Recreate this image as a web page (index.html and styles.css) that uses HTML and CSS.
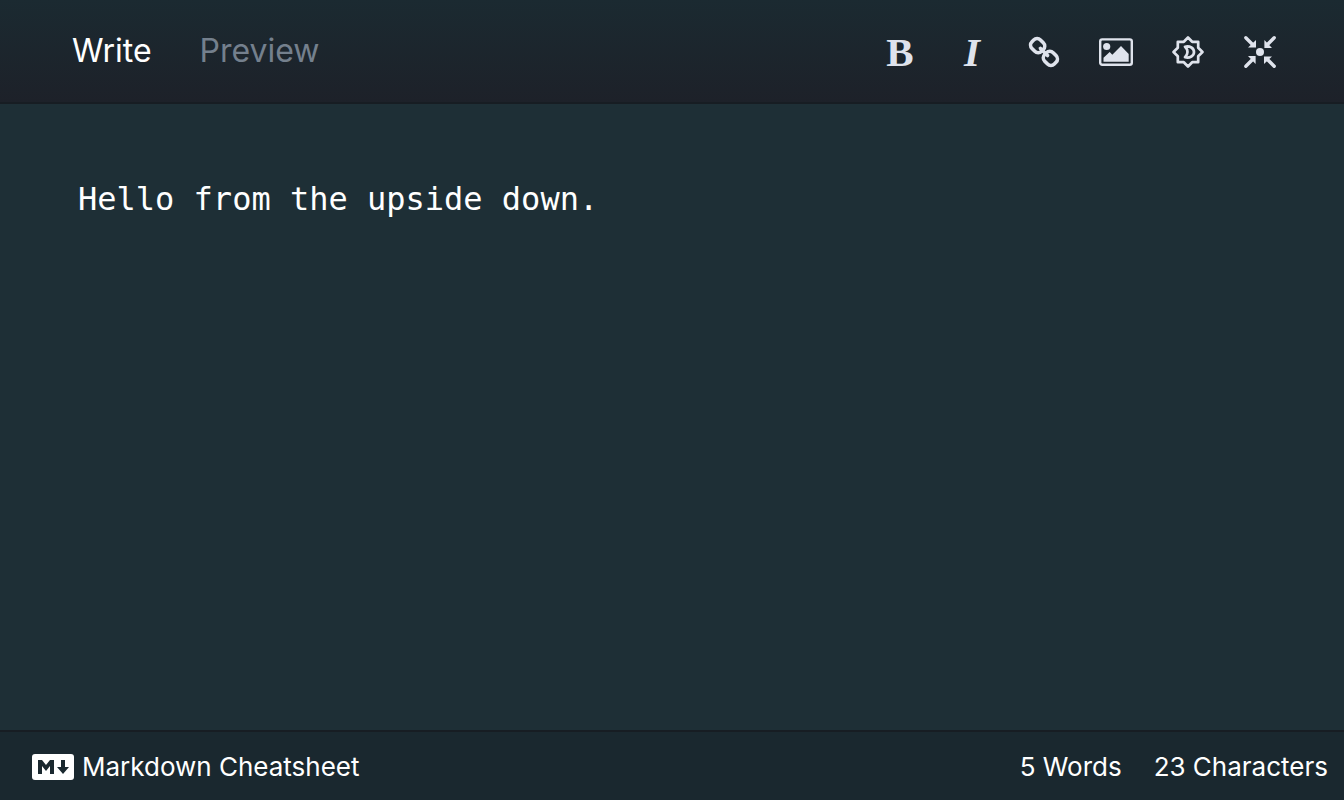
FILE: index.html
```html
<!DOCTYPE html>
<html lang="en">
<head>
<meta charset="utf-8">
<title>Markdown editor</title>
<link rel="stylesheet" href="styles.css">
</head>
<body>
<main class="editor">
  <header class="toolbar">
    <nav class="tabs" role="tablist" aria-label="Editor mode">
      <button class="tab tab-active" type="button" role="tab" aria-selected="true">Write</button>
      <button class="tab" type="button" role="tab" aria-selected="false">Preview</button>
    </nav>
    <div class="tools">
      <button class="tool tool-bold" type="button" aria-label="Bold">B</button>
      <button class="tool tool-italic" type="button" aria-label="Italic">I</button>
      <button class="tool" type="button" aria-label="Link">
        <svg class="icon" viewBox="0 0 40 40" fill="none" stroke="currentColor" stroke-width="3.6" stroke-linecap="round">
          <g transform="rotate(45 20 20)">
            <rect x="4.200" y="14" width="13.600" height="12" rx="4.800"/>
            <rect x="22.200" y="14" width="13.600" height="12" rx="4.800"/>
            <path d="M15 20h10"/>
          </g>
        </svg>
      </button>
      <button class="tool" type="button" aria-label="Image">
        <svg class="icon" viewBox="0 0 40 40">
          <rect x="4.2" y="7.4" width="31.6" height="25.4" rx="2" fill="none" stroke="currentColor" stroke-width="2.4"/>
          <circle cx="10.7" cy="14.5" r="3.6" fill="currentColor"/>
          <path d="M7.500 29.700v-4l6.200-5.700 2.600 2.700 8.700-8.700 7.700 8v7.700z" fill="currentColor"/>
        </svg>
      </button>
      <button class="tool" type="button" aria-label="Toggle dark theme">
        <svg class="icon" viewBox="0 0 40 40" fill="none" stroke="currentColor" stroke-width="2.700" stroke-linejoin="round">
          <path d="M20 5.500l4.200 4.300h6v6l4.300 4.200-4.300 4.200v6h-6l-4.200 4.300-4.200-4.300h-6v-6l-4.300-4.200 4.300-4.200v-6h6z"/>
          <path d="M17 14.700c5-1 9 1.300 9 5.300s-4 6.300-9 5.300c3.300-3 3.300-7.600 0-10.600z"/>
        </svg>
      </button>
      <button class="tool" type="button" aria-label="Exit full screen">
        <svg class="icon" viewBox="0 0 40 40" fill="currentColor">
          <circle cx="20" cy="20" r="4"/>
          <g id="arrow">
            <path d="M5.800 5.800l7 7" stroke="currentColor" stroke-width="3.400" stroke-linecap="round"/>
            <path d="M16 8v7.600h-8z"/>
          </g>
          <use href="#arrow" transform="rotate(90 20 20)"/>
          <use href="#arrow" transform="rotate(180 20 20)"/>
          <use href="#arrow" transform="rotate(270 20 20)"/>
        </svg>
      </button>
    </div>
  </header>
  <textarea class="document" aria-label="Markdown text" spellcheck="false">Hello from the upside down.</textarea>
  <footer class="status">
    <a class="cheatsheet" href="#">
      <svg class="mark" viewBox="0 0 42 26" aria-hidden="true">
        <rect width="42" height="26" rx="3" fill="#fff"/>
        <path d="M6 20V6h4l4 5 4-5h4v14h-4v-8l-4 5-4-5v8zM29 6h4v7h4l-6 7-6-7h4z" fill="#1a282f"/>
      </svg>
      <span>Markdown Cheatsheet</span>
    </a>
    <div class="counts">
      <span>5 Words</span>
      <span>23 Characters</span>
    </div>
  </footer>
</main>
</body>
</html>
```
FILE: styles.css
```css
* {
  box-sizing: border-box;
}

body {
  margin: 0;
  background: #1e2f36;
  color: #fff;
  font-family: Inter, "Liberation Sans", sans-serif;
}

button {
  padding: 0;
  border: 0;
  background: none;
  font: inherit;
  cursor: pointer;
}

.editor {
  display: flex;
  flex-direction: column;
  min-height: 100vh;
}

.toolbar {
  display: flex;
  align-items: flex-start;
  justify-content: space-between;
  padding: 31px 64px 29px 72px;
  border-bottom: 2px solid #171d23;
  background: linear-gradient(#1b2a31, #1d2129);
}

.tabs {
  display: flex;
  gap: 48px;
}

.tab {
  color: #74808d;
  font-size: 32px;
  line-height: 40px;
}

.tab-active {
  color: #fff;
}

.tools {
  display: flex;
  gap: 32px;
}

.tool {
  display: grid;
  place-items: center;
  width: 40px;
  height: 42px;
  color: #dfe3ec;
}

.tool-bold,
.tool-italic {
  font: bold 41px/42px "Liberation Serif", serif;
}

.tool-italic {
  font-style: italic;
}

.icon {
  width: 40px;
  height: 40px;
}

.document {
  display: block;
  flex: 1;
  width: 100%;
  padding: 71px 78px;
  border: 0;
  outline: 0;
  resize: none;
  background: #1e2f36;
  color: #fff;
  font: 32px/48px "DejaVu Sans Mono", monospace;
}

.status {
  display: flex;
  align-items: center;
  justify-content: space-between;
  padding: 19px 16px 17px 32px;
  border-top: 2px solid #171d23;
  background: #1a282f;
  font-size: 26px;
  line-height: 32px;
}

.cheatsheet {
  display: flex;
  align-items: center;
  gap: 8px;
  color: inherit;
  text-decoration: none;
}

.mark {
  width: 42px;
  height: 26px;
}

.counts {
  display: flex;
  gap: 32px;
}
```
